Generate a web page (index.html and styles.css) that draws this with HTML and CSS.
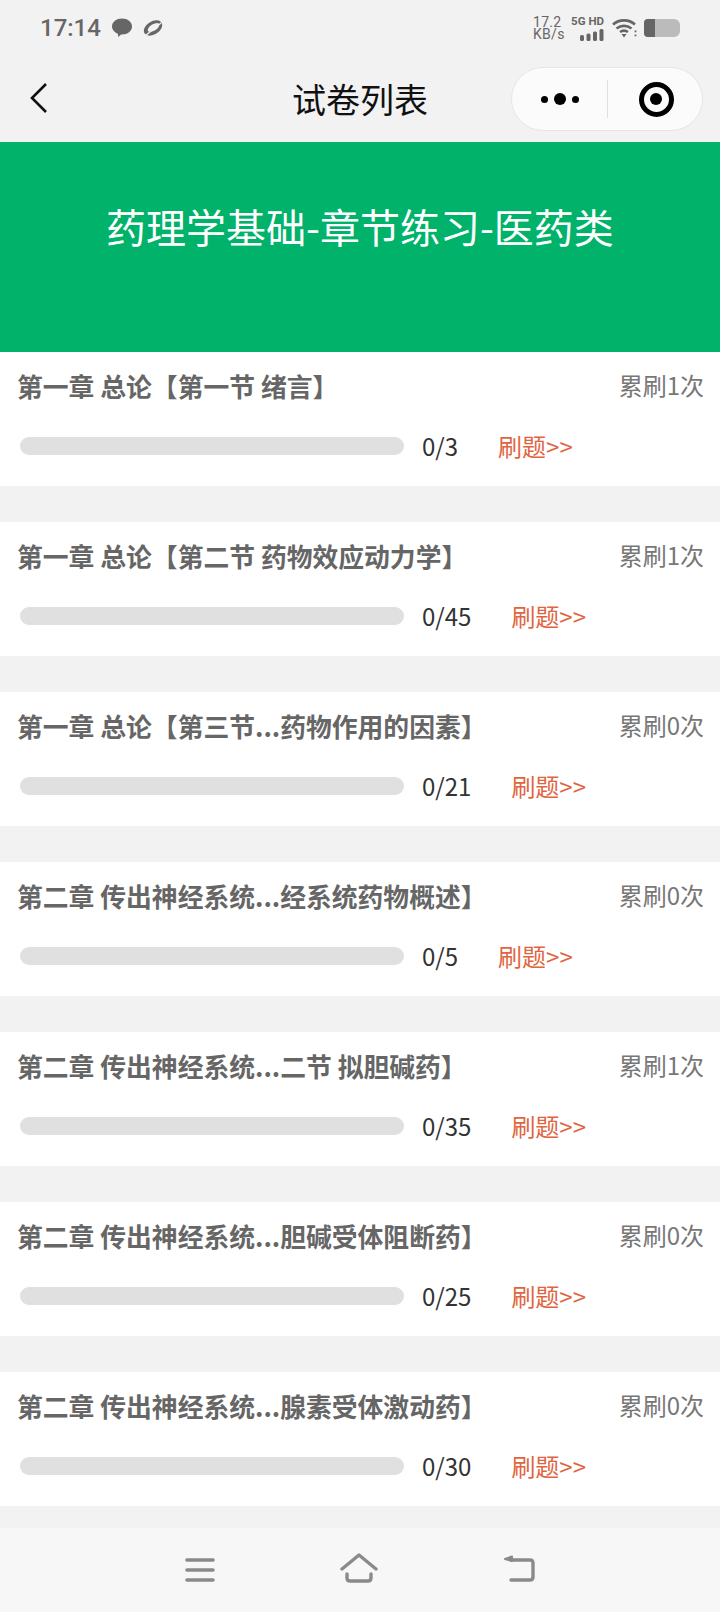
FILE: index.html
```html
<!DOCTYPE html>
<html lang="zh-CN">
<head>
    <meta charset="UTF-8">
    <meta name="viewport" content="width=device-width, initial-scale=1.0">
    <title>试卷列表</title>
    <link rel="stylesheet" href="styles.css">
</head>
<body>

    <div class="phone">
        <div class="statusbar">
            <div class="status-left">
                <span class="time">17:14</span>
                <svg class="status-icon" width="22" height="22" viewBox="0 0 22 22">
                    <path d="M11 1.500c5.500 0 10 3.400 10 8s-4.500 8-10 8l-1 .1-2.600 2.400-.6-3.300C3.700 15.400 1 12.800 1 9.500c0-4.600 4.500-8 10-8z" fill="#666"/>
                </svg>
                <svg class="status-icon" width="22" height="22" viewBox="0 0 22 22">
                    <ellipse cx="11" cy="11" rx="10" ry="6.500" transform="rotate(-32 11 11)" fill="#666"/>
                    <ellipse cx="11.500" cy="10.500" rx="6.500" ry="3.200" transform="rotate(-32 11.500 10.500)" fill="#f2f2f2"/>
                    <path d="M3 19 19 6" stroke="#f2f2f2" stroke-width="1.500"/>
                </svg>
            </div>
            <div class="status-right">
                <div class="speed">17.2<br>KB/s</div>
                <div class="signal">
                    <span class="signal-text">5G HD</span>
                    <svg width="24" height="12" viewBox="0 0 24 12">
                        <rect x="0" y="6" width="4" height="6" rx="1.500" fill="#666"/>
                        <rect x="6.500" y="4.500" width="4" height="7.500" rx="1.500" fill="#666"/>
                        <rect x="13" y="2.500" width="4" height="9.500" rx="1.500" fill="#666"/>
                        <rect x="19.500" y="0" width="4" height="12" rx="1.500" fill="#666"/>
                    </svg>
                </div>
                <svg class="wifi" width="25" height="20" viewBox="0 0 25 20" fill="none" stroke="#666" stroke-width="2.600">
                    <path d="M1 6.500C7 1 17 1 23 6.500"/>
                    <path d="M4.500 10.500C9 7 15 7 19.500 10.500"/>
                    <path d="M8 14c2.600-1.800 5.400-1.800 8 0"/>
                    <path d="M9.500 16h5l-2.500 3.500z" fill="#666" stroke="none"/>
                    <path d="M23.500 12.500v1.800M23.500 16.500v1.800" stroke-width="1.800"/>
                </svg>
                <div class="battery"><div class="battery-level"></div></div>
            </div>
        </div>

        <div class="navbar">
            <svg class="back" width="20" height="32" viewBox="0 0 20 32" fill="none" stroke="#111" stroke-width="2.600">
                <path d="M17 2 3 16l14 14"/>
            </svg>
            <h1 class="nav-title">试卷列表</h1>
            <div class="capsule">
                <div class="capsule-dots">
                    <i class="dot"></i><i class="dot dot-big"></i><i class="dot"></i>
                </div>
                <div class="capsule-line"></div>
                <div class="capsule-close"><i></i></div>
            </div>
        </div>

        <div class="banner">药理学基础-章节练习-医药类</div>

        <ul class="lista">
            <li class="card">
                <div class="card-top">
                    <span class="card-title">第一章 总论【第一节 绪言】</span>
                    <span class="card-count">累刷1次</span>
                </div>
                <div class="card-bottom">
                    <div class="bar"></div>
                    <span class="score">0/3</span>
                    <a class="go">刷题&gt;&gt;</a>
                </div>
            </li>
            <li class="card">
                <div class="card-top">
                    <span class="card-title">第一章 总论【第二节 药物效应动力学】</span>
                    <span class="card-count">累刷1次</span>
                </div>
                <div class="card-bottom">
                    <div class="bar"></div>
                    <span class="score">0/45</span>
                    <a class="go">刷题&gt;&gt;</a>
                </div>
            </li>
            <li class="card">
                <div class="card-top">
                    <span class="card-title">第一章 总论【第三节...药物作用的因素】</span>
                    <span class="card-count">累刷0次</span>
                </div>
                <div class="card-bottom">
                    <div class="bar"></div>
                    <span class="score">0/21</span>
                    <a class="go">刷题&gt;&gt;</a>
                </div>
            </li>
            <li class="card">
                <div class="card-top">
                    <span class="card-title">第二章 传出神经系统...经系统药物概述】</span>
                    <span class="card-count">累刷0次</span>
                </div>
                <div class="card-bottom">
                    <div class="bar"></div>
                    <span class="score">0/5</span>
                    <a class="go">刷题&gt;&gt;</a>
                </div>
            </li>
            <li class="card">
                <div class="card-top">
                    <span class="card-title">第二章 传出神经系统...二节 拟胆碱药】</span>
                    <span class="card-count">累刷1次</span>
                </div>
                <div class="card-bottom">
                    <div class="bar"></div>
                    <span class="score">0/35</span>
                    <a class="go">刷题&gt;&gt;</a>
                </div>
            </li>
            <li class="card">
                <div class="card-top">
                    <span class="card-title">第二章 传出神经系统...胆碱受体阻断药】</span>
                    <span class="card-count">累刷0次</span>
                </div>
                <div class="card-bottom">
                    <div class="bar"></div>
                    <span class="score">0/25</span>
                    <a class="go">刷题&gt;&gt;</a>
                </div>
            </li>
            <li class="card">
                <div class="card-top">
                    <span class="card-title">第二章 传出神经系统...腺素受体激动药】</span>
                    <span class="card-count">累刷0次</span>
                </div>
                <div class="card-bottom">
                    <div class="bar"></div>
                    <span class="score">0/30</span>
                    <a class="go">刷题&gt;&gt;</a>
                </div>
            </li>
        </ul>

        <div class="bottombar">
            <svg width="30" height="30" viewBox="0 0 30 30" fill="none" stroke="#8a8a8a" stroke-width="3.600" stroke-linecap="round">
                <path d="M2 7h26M2 17h26M2 27h26"/>
            </svg>
            <svg width="38" height="30" viewBox="0 0 38 30" fill="none" stroke="#8a8a8a" stroke-width="3.400" stroke-linecap="round" stroke-linejoin="round">
                <path d="M2 16 19 2l17 14"/>
                <path d="M7 21v4q0 3 3 3h18q3 0 3-3v-4"/>
            </svg>
            <svg width="32" height="30" viewBox="0 0 32 30" fill="none" stroke="#8a8a8a" stroke-width="3.400" stroke-linecap="round" stroke-linejoin="round">
                <path d="M8 27h19q3 0 3-3V10q0-3-3-3H8"/>
                <path d="M9 3.500 2 6l7 2z" fill="#8a8a8a" stroke-width="2"/>
            </svg>
        </div>
    </div>

</body>
</html>
```

FILE: styles.css
```css
* {
    margin: 0;
    padding: 0;
    box-sizing: border-box;
}

body {
    background-color: #f2f2f2;
    font-family: "Noto Sans CJK SC", "Noto Sans", sans-serif;
}

.phone {
    width: 720px;
    height: 1612px;
    display: flex;
    flex-direction: column;
    overflow: hidden;
}

.statusbar {
    height: 56px;
    padding: 0 40px;
    display: flex;
    justify-content: space-between;
    align-items: center;
    color: #666;
}

.status-left {
    display: flex;
    align-items: center;
    gap: 9px;
}

.time {
    font-family: Roboto, sans-serif;
    font-size: 24px;
    font-weight: 500;
    margin-right: 1px;
}

.status-right {
    display: flex;
    align-items: center;
}

.speed {
    width: 39px;
    font-family: Roboto, sans-serif;
    font-size: 14px;
    line-height: 12.500px;
    letter-spacing: .3px;
}

.signal {
    display: flex;
    flex-direction: column;
    align-items: flex-end;
    gap: 2px;
    width: 32px;
}

.signal-text {
    font-family: Roboto, sans-serif;
    font-size: 11.500px;
    line-height: 12px;
    font-weight: 700;
    white-space: nowrap;
}

.wifi {
    margin-left: 8px;
}

.battery {
    width: 36px;
    height: 18px;
    margin-left: 7px;
    background-color: #bbb;
    border-radius: 4px 6px 6px 4px;
    overflow: hidden;
}

.battery-level {
    width: 11px;
    height: 100%;
    background-color: #666;
}

.navbar {
    height: 86px;
    position: relative;
    display: flex;
    align-items: center;
    justify-content: center;
}

.back {
    position: absolute;
    left: 29px;
    top: 26px;
}

.nav-title {
    font-size: 34px;
    font-weight: 400;
    color: #111;
    padding-bottom: 2px;
}

.capsule {
    position: absolute;
    left: 511px;
    top: 11px;
    width: 192px;
    height: 64px;
    background-color: #fbfbfb;
    border: 1px solid #e6e6e6;
    border-radius: 32px;
    display: flex;
    align-items: center;
}

.capsule-dots {
    width: 95px;
    display: flex;
    align-items: center;
    justify-content: center;
    gap: 6px;
}

.dot {
    width: 7px;
    height: 7px;
    border-radius: 50%;
    background-color: #000;
}

.dot-big {
    width: 12px;
    height: 12px;
}

.capsule-line {
    width: 1px;
    height: 38px;
    background-color: #e0e0e0;
}

.capsule-close {
    flex: 1;
    display: flex;
    justify-content: center;
    padding-left: 2px;
}

.capsule-close i {
    width: 35px;
    height: 35px;
    border: 5px solid #000;
    border-radius: 50%;
    display: flex;
    align-items: center;
    justify-content: center;
}

.capsule-close i::after {
    content: "";
    width: 12px;
    height: 12px;
    border-radius: 50%;
    background-color: #000;
}

.banner {
    height: 210px;
    background-color: #00b26a;
    color: #fff;
    font-size: 40px;
    text-align: center;
    padding-top: 58px;
    line-height: 52px;
}

.lista {
    list-style: none;
    flex: 1;
    display: flex;
    flex-direction: column;
    gap: 36px;
}

.card {
    height: 134px;
    background-color: #fff;
    padding: 0 16px 0 17px;
}

.card-top {
    height: 70px;
    display: flex;
    justify-content: space-between;
    align-items: center;
}

.card-title {
    font-size: 25.800px;
    font-weight: 700;
    color: #666;
    padding-bottom: 4px;
}

.card-count {
    font-size: 24px;
    color: #777;
    padding-bottom: 6px;
}

.card-bottom {
    display: flex;
    align-items: center;
    height: 48px;
    padding-left: 3px;
}

.bar {
    width: 384px;
    height: 18px;
    background-color: #e0e0e0;
    border-radius: 9px;
    margin-right: 18px;
}

.score {
    font-size: 24px;
    color: #333;
    margin-right: 40px;
    padding-bottom: 2px;
}

.go {
    font-size: 24px;
    color: #e0653f;
    padding-bottom: 2px;
}

.bottombar {
    height: 84px;
    background-color: #f7f7f7;
    display: flex;
    justify-content: center;
    align-items: center;
    gap: 125px;
    padding-bottom: 4px;
}
```
